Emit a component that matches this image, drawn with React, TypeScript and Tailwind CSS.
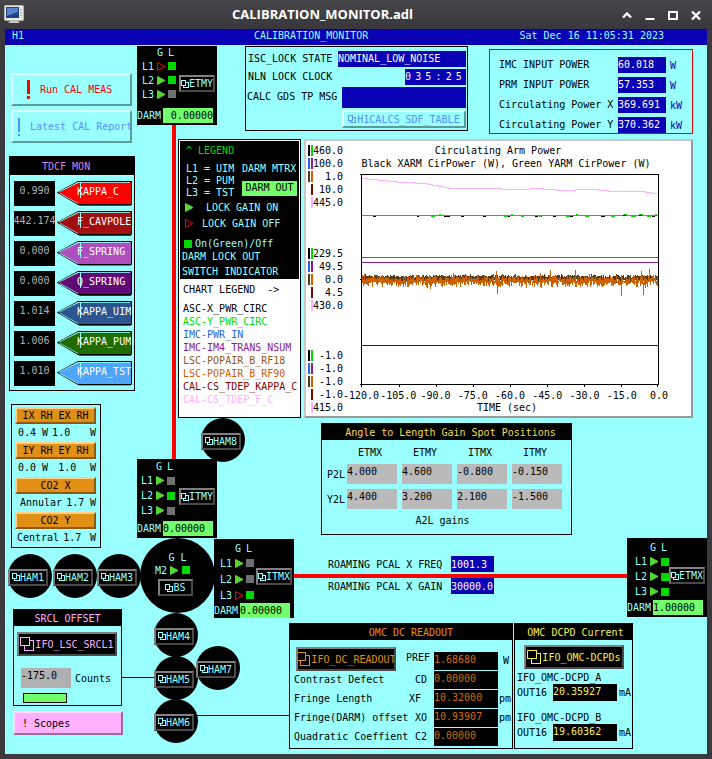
import { useId } from 'react';
import type { ReactNode } from 'react';
import clsx from 'clsx';

const kappas = [
  { name: 'KAPPA_C', value: '0.990', fill: '#ff0000' },
  { name: 'F_CAVPOLE', value: '442.174', fill: '#a01010' },
  { name: 'F_SPRING', value: '0.000', fill: '#ae4ebc' },
  { name: 'Q_SPRING', value: '0.000', fill: '#610a75' },
  { name: 'KAPPA_UIM', value: '1.014', fill: '#2a5590' },
  { name: 'KAPPA_PUM', value: '1.006', fill: '#216c00' },
  { name: 'KAPPA_TST', value: '1.010', fill: '#4ea5f9' },
];

const heaters = [
  { title: 'IX RH EX RH', left: '0.4 W', right: '1.0', pad: 'pl-[3px]' },
  { title: 'IY RH EY RH', left: '0.0 W', right: ' 1.0', pad: 'pl-[3px]' },
  { title: 'CO2 X', left: 'Annular', right: '1.7', pad: 'pl-[5px]' },
  { title: 'CO2 Y', left: 'Central', right: '1.7', pad: 'pl-0.5' },
];

const powers = [
  { label: 'IMC INPUT POWER', value: '60.018', unit: 'W' },
  { label: 'PRM INPUT POWER', value: '57.353', unit: 'W' },
  { label: 'Circulating Power X', value: '369.691', unit: 'kW' },
  { label: 'Circulating Power Y', value: '370.362', unit: 'kW' },
];

const channels = [
  { name: 'ASC-X_PWR_CIRC', color: 'text-black' },
  { name: 'ASC-Y_PWR_CIRC', color: 'text-[#00d800]' },
  { name: 'IMC-PWR_IN', color: 'text-[#2a63e4]' },
  { name: 'IMC-IM4_TRANS_NSUM', color: 'text-[#8b1a96]' },
  { name: 'LSC-POPAIR_B_RF18', color: 'text-[#8a5a22]' },
  { name: 'LSC-POPAIR_B_RF90', color: 'text-[#cd6100]' },
  { name: 'CAL-CS_TDEP_KAPPA_C', color: 'text-[#820400]' },
  { name: 'CAL-CS_TDEP_F_C', color: 'text-[#ffb0ff]' },
];

const axisColors = [
  ['bg-black', 'bg-[#00d800]'],
  ['bg-[#2a63e4]', 'bg-[#8b1a96]'],
  ['bg-[#5a3a10]', 'bg-[#cd6100]'],
  ['bg-transparent', 'bg-[#820400]'],
  ['bg-transparent', 'bg-[#ffb0ff]'],
];

const axisGroups = [
  ['460.0', '100.0', '1.0', '10.0', '445.0'],
  ['229.5', '49.5', '0.0', '4.5', '430.0'],
  ['-1.0', '-1.0', '-1.0', '-1.0', '415.0'],
];

const times = ['-120.0', '-105.0', '-90.0', '-75.0', '-60.0', '-45.0', '-30.0', '-15.0', '0.0'];

const optics = ['ETMX', 'ETMY', 'ITMX', 'ITMY'];
const gains = [
  { name: 'P2L', values: ['4.000', '4.600', '-0.800', '-0.150'] },
  { name: 'Y2L', values: ['4.400', '3.200', '2.100', '-1.500'] },
];

const readouts = [
  { label: 'Contrast Defect', code: 'CD' },
  { label: 'Fringe Length', code: 'XF ' },
  { label: 'Fringe(DARM) offset', code: 'XO' },
  { label: 'Quadratic Coeffient', code: 'C2' },
];
const readoutValues = [
  { value: '1.68680', unit: 'W' },
  { value: '0.00000', unit: '' },
  { value: '10.32000', unit: 'pm' },
  { value: '10.93907', unit: 'pm' },
  { value: '0.00000', unit: '' },
];

// Small deterministic generator so the noise trace is the same on every render
function noisePath(seed: number, top: number, bottom: number, jitter: number) {
  let s = seed;
  const next = () => {
    s = (s * 16807) % 2147483647;
    return s / 2147483647;
  };
  let d = '';
  for (let x = 1; x < 297; x++) {
    const spike = next() > 0.95 ? jitter : 0;
    const y1 = Math.round(top - next() * jitter + next() * jitter - spike * next());
    const y2 = Math.round(bottom - next() * jitter + next() * jitter + spike * next());
    d += `M${x + 0.5} ${y1}V${Math.max(y2, y1 + 1)}`;
  }
  return d;
}

const brownNoise = noisePath(71, 102, 107, 2);
const orangeNoise = noisePath(4242, 104, 110, 4);

function ScreensIcon({ big = false }: { big?: boolean }) {
  if (big) {
    return (
      <svg width="14" height="14" viewBox="0 0 14 14" className="shrink-0" fill="none" stroke="currentColor" shapeRendering="crispEdges" aria-hidden="true">
        <path d="M.5 .5h9v8h-9zM9.500 3.500h4v10h-9v-5" />
      </svg>
    );
  }
  return (
    <svg width="8" height="8" viewBox="0 0 8 8" className="shrink-0" fill="none" stroke="currentColor" shapeRendering="crispEdges" aria-hidden="true">
      <path d="M.5 .5h4v5h-4zM4.500 2.500h3v5h-5v-2" />
    </svg>
  );
}

function Related({ children, className, big = false }: { children: ReactNode; className?: string; big?: boolean }) {
  return (
    <button
      className={clsx(
        'flex items-center justify-center overflow-hidden whitespace-nowrap border-2 border-t-[#808080] border-l-[#808080] border-r-[#4a4a4a] border-b-[#4a4a4a] bg-black',
        big ? 'h-6 w-[100px] gap-px' : 'h-[17px]',
        className,
      )}
    >
      <ScreensIcon big={big} />
      {children}
    </button>
  );
}

function Gain({ on }: { on: boolean }) {
  return (
    <svg width="9" height="9" viewBox="0 0 9 9" aria-hidden="true">
      <path d="M.5 .5L8 4.500L.5 8.500z" fill={on ? '#55d633' : 'none'} stroke={on ? '#55d633' : '#ff0000'} />
    </svg>
  );
}

type OpticProps = {
  name: string;
  className: string;
  head: string;
  row: string;
  pad: string;
  gain: boolean[];
  lock: boolean[];
  darm: string;
  align?: string;
};

function Optic({ name, className, head, row, pad, gain, lock, darm, align }: OpticProps) {
  const id = useId();
  return (
    <section className={clsx('absolute flex h-[79px] w-20 flex-col justify-between bg-black pb-0.5 text-[#99ffff]', className)}>
      <div className="flex">
        <div className={pad}>
          <div className={clsx('flex items-end', head)}>
            <span className="w-[15px]" />
            <span className="w-[11px]">G</span>
            <span>L</span>
          </div>
          {['L1', 'L2', 'L3'].map((level, i) => (
            <div key={level} className={clsx('flex items-center', row)}>
              <span className="w-[15px]">{level}</span>
              <span className="w-[11px]"><Gain on={gain[i]} /></span>
              <span className={clsx('size-2', lock[i] ? 'bg-[#00d800]' : 'bg-[#707070]')} />
            </div>
          ))}
        </div>
        <Related className="mt-[29px] mr-0.5 ml-auto w-9">{name}</Related>
      </div>
      <div className="flex items-center gap-0.5">
        <label htmlFor={id} className="w-6">DARM</label>
        <input id={id} defaultValue={darm} className={clsx('h-[15px] w-[50px] bg-[#73ff6b] text-black', align)} />
      </div>
    </section>
  );
}

function Chamber({ name, className }: { name: string; className: string }) {
  return (
    <div className={clsx('absolute flex size-11 items-center rounded-full bg-black pt-0.5', className)}>
      <Related className="w-10 text-[#99ffff]">{name}</Related>
    </div>
  );
}

function Panel({ title, color, className, children }: { title: string; color: string; className?: string; children: ReactNode }) {
  return (
    <section className={clsx('border border-black', className)}>
      <h2 className={clsx('flex h-4 items-center justify-center bg-black', color)}>{title}</h2>
      {children}
    </section>
  );
}

function TitleBar() {
  return (
    <header className="flex h-[29px] items-center bg-linear-to-b from-[#47464b] to-[#38373b] pr-2.5 pl-1 text-white">
      <svg width="20" height="19" viewBox="0 0 20 19" aria-hidden="true">
        <rect x=".5" y=".5" width="19" height="15" rx="1" fill="#e8e8e2" stroke="#b5b5ae" />
        <rect x="2" y="2" width="13" height="11" fill="#1d3f86" />
        <path d="M3 3h11v4L3 11z" fill="#5682cc" />
        <path d="M17 4v1M17 7v1M17 10v1" stroke="#777" />
        <path d="M6 16h8l2 2H4z" fill="#c9c9c4" />
      </svg>
      <h1 className="flex-1 text-center font-['Open_Sans','Noto_Sans',sans-serif] text-[13px] font-bold">CALIBRATION_MONITOR.adl</h1>
      <div className="flex gap-[11px]">
        <button aria-label="Shade" className="size-3">
          <svg viewBox="0 0 12 12" fill="none" stroke="white" strokeWidth="2.400"><path d="M2 8.500L6 4.500L10 8.500" /></svg>
        </button>
        <button aria-label="Minimize" className="size-3">
          <svg viewBox="0 0 12 12" fill="none" stroke="white" strokeWidth="2"><path d="M1.500 10h9" /></svg>
        </button>
        <button aria-label="Maximize" className="size-3">
          <svg viewBox="0 0 12 12" fill="none" stroke="white" strokeWidth="2"><path d="M2 3h8v7H2z" /></svg>
        </button>
        <button aria-label="Close" className="size-3">
          <svg viewBox="0 0 12 12" fill="none" stroke="white" strokeWidth="2.400"><path d="M2 2.500L10 10.500M10 2.500L2 10.500" /></svg>
        </button>
      </div>
    </header>
  );
}

function Kappa({ name, value, fill }: { name: string; value: string; fill: string }) {
  return (
    <div className="flex h-[30px] gap-0.5 last:h-7">
      <span className="flex h-[25px] w-[41px] justify-center bg-black pt-[3px] text-[#b0b0b0]">{value}</span>
      <button className="relative h-[25px] w-[76px] pb-1 pl-5 text-left text-white">
        <svg width="76" height="25" viewBox="0 0 76 25" className="absolute inset-0" aria-hidden="true">
          <path d="M1 11.500L23 1H74V25H23z" fill={fill} />
          <path d="M.5 11.500L21 .5H74.500V23.500H21z" fill="none" stroke="black" />
          <path d="M2 11L21 1.500H73M3 12.500L21 22.500" fill="none" stroke="#99ffff" strokeWidth=".8" />
          <path d="M23.500 1V17" stroke="#99ffff" />
        </svg>
        <span className="relative">{name}</span>
      </button>
    </div>
  );
}

function LeftColumn() {
  const bevel = 'flex h-[33px] w-[121px] items-center overflow-hidden whitespace-nowrap border-2 border-t-[#d5ffff] border-l-[#d5ffff] border-r-[#5c9999] border-b-[#5c9999]';
  return (
    <div className="w-[132px] shrink-0 pt-7 pl-1">
      <div className="flex flex-col gap-1 pl-0.5">
        <button className={clsx(bevel, 'gap-2.5 pl-3.5 text-[#ff0000]')}>
          <svg width="3" height="19" className="shrink-0" fill="currentColor" aria-hidden="true"><path d="M0 0h3v14H0zM0 16h3v3H0z" /></svg>
          Run CAL MEAS
        </button>
        <button className={clsx(bevel, 'gap-2.5 pl-[5px] text-[#5590ff]')}>
          <svg width="2" height="18" className="shrink-0" fill="currentColor" aria-hidden="true"><path d="M0 0h2v14H0zM0 16h2v2H0z" /></svg>
          Latest CAL Report
        </button>
      </div>

      <section className="mt-[13px] w-[126px] border border-black pb-px">
        <h2 className="flex h-[18px] items-center bg-black pl-8 text-[#dc82e6]">TDCF MON</h2>
        <div className="pt-1.5 pl-1">
          {kappas.map((k) => <Kappa key={k.name} {...k} />)}
        </div>
      </section>

      <section className="mt-[13px] ml-0.5 w-[90px] border border-black px-[3px] pt-0.5">
        {heaters.map((h) => (
          <div key={h.title} className="h-[35px]">
            <button className="block h-[17px] w-[81px] border-2 border-t-[#ffd089] border-l-[#ffd089] border-r-[#8c5a0c] border-b-[#8c5a0c] bg-[#e19015] leading-3">{h.title}</button>
            <div className={clsx('flex items-center pt-0.5 whitespace-pre', h.pad)}>
              <span>{h.left}</span>
              <span className="ml-1">{h.right}</span>
              <span className="mr-px ml-auto">W</span>
            </div>
          </div>
        ))}
      </section>
    </div>
  );
}

function StatusPanels() {
  return (
    <div className="flex items-start justify-between pt-px pl-[67px]">
      <section className="h-[85px] w-[223px] border border-black pt-1 pr-px">
        <div className="flex h-[18px] items-start justify-between pl-0.5">
          <span className="pt-px">ISC_LOCK STATE</span>
          <span className="h-4 w-32 bg-[#0a00b4] pt-px text-white">NOMINAL_LOW_NOISE</span>
        </div>
        <div className="flex h-[18px] items-start justify-between pl-0.5">
          <span className="pt-px">NLN LOCK CLOCK</span>
          <span className="flex h-4 w-[61px] bg-[#0a00b4] pt-px text-white">
            {'035:25'.split('').map((c, i) => <span key={i} className="flex-1">{c}</span>)}
          </span>
        </div>
        <div className="flex items-start justify-between pl-px">
          <span className="pt-[3px]">CALC GDS TP MSG</span>
          <span className="h-[21px] w-[124px] bg-[#0a00b4]" />
        </div>
        <button className="mt-0.5 ml-auto flex h-[18px] w-[124px] items-center justify-center gap-px border-2 border-t-[#d5ffff] border-l-[#d5ffff] border-r-[#5c9999] border-b-[#5c9999] text-[#5590ff]">
          <ScreensIcon />
          H1CALCS_SDF_TABLE
        </button>
      </section>

      <section className="mt-[3px] flex h-[85px] w-[204px] flex-col gap-1 border border-[#f00000] pt-[7px] pl-[9px]">
        {powers.map((p) => (
          <div key={p.label} className="flex h-4 items-start">
            <span className="w-[119px] pt-px">{p.label}</span>
            <span className="h-4 w-12 bg-[#0a00b4] pt-px text-white">{p.value}</span>
            <span className="pt-0.5 pl-1 text-[#0a00b4]">{p.unit}</span>
          </div>
        ))}
      </section>
    </div>
  );
}

function Legend() {
  return (
    <section className="w-[123px] shrink-0 border border-black bg-white p-px">
      <div className="h-[138px] bg-black px-0.5 pt-[3px] text-[#99ffff]">
        <h2 className="pl-1 text-[#00d800]">^ LEGEND</h2>
        <div className="mt-1.5 flex justify-between pl-1 leading-3 whitespace-nowrap">
          <div>
            <div>L1 = UIM</div>
            <div>L2 = PUM</div>
            <div>L3 = TST</div>
          </div>
          <div className="flex w-[55px] flex-col gap-1.5">
            <span>DARM MTRX</span>
            <span className="h-[15px] bg-[#73ff6b] pt-px text-center text-black">DARM OUT</span>
          </div>
        </div>
        <div className="flex h-4 items-center gap-3 pl-[3px]"><Gain on /><span>LOCK GAIN ON</span></div>
        <div className="flex h-4 items-center gap-2 pl-[3px]"><Gain on={false} /><span>LOCK GAIN OFF</span></div>
        <div className="mt-1.5 flex items-center gap-[3px] pl-0.5"><span className="size-2 bg-[#00d800]" />On(Green)/Off</div>
        <div>DARM LOCK OUT</div>
        <div className="mt-0.5">SWITCH INDICATOR</div>
      </div>
      <div className="bg-white pt-1 pb-1.5 pl-[3px]">
        <h3 className="mb-1.5 whitespace-pre">CHART LEGEND  -&gt;</h3>
        {channels.map((c) => <div key={c.name} className={c.color}>{c.name}</div>)}
      </div>
    </section>
  );
}

function Chart() {
  return (
    <section className="flex min-w-0 flex-1 border-2 border-t-[#c8c8c8] border-l-[#c8c8c8] border-r-[#9a9a9a] border-b-[#9a9a9a] bg-white pt-[3px] pr-8 pb-0.5">
      <div className="flex w-[38px] shrink-0 flex-col justify-between pl-0.5">
        {axisGroups.map((group, g) => (
          <div key={g}>
            {group.map((v, i) => (
              <div key={i} className="flex items-center">
                <span className={clsx('h-[11px] w-0.5', axisColors[i][0])} />
                <span className={clsx('ml-px h-[11px] w-0.5', axisColors[i][1])} />
                <span className="w-[30px] shrink-0 text-right">{v}</span>
              </div>
            ))}
          </div>
        ))}
      </div>
      <div className="ml-[17px] flex min-w-0 flex-1 flex-col">
        <h2 className="pr-6 text-center">Circulating Arm Power</h2>
        <div className="pr-2 text-center whitespace-nowrap">Black XARM CirPower (W), Green YARM CirPower (W)</div>
        <svg viewBox="0 0 298 215" preserveAspectRatio="none" shapeRendering="crispEdges" className="mt-1 h-[215px] w-full overflow-visible" fill="none" role="img" aria-label="Circulating arm power over the last 120 seconds">
          <path d="M1 4.500H6V5.500H16V6.500H26V7.500H36V8.500H54V9.500H66V10.500H71V11.500H77V12.500H82V13.500H87V14.500H140V15.500H169V14.500H182V15.500H194V16.500H214V15.500H238V16.500H247V17.500H284V18.500H290V19.500H297" stroke="#ffb0ff" />
          <path d="M1 41.500H297" stroke="#00d800" />
          <path d="M12 42.500h3M56 42.500h2M83 42.500h6M100 42.500h3M122 42.500h3M146 42.500h3M174 42.500h3M192 42.500h3M209 42.500h3M240 42.500h4M262 41.500h3M278 41.500h3M291 42.500h3" stroke="black" />
          <path d="M70 42.500h4M78 40.500h2M143 42.500h4M150 40.500h2M160 42.500h3M178 42.500h3M205 42.500h4M215 40.500h2M224 42.500h4M250 42.500h4M263 40.500h3M270 42.500h5M278 40.500h4M286 42.500h4M294 40.500h2" stroke="#00d800" />
          <path d="M1 83.500H297" stroke="#2a63e4" />
          <path d="M1 88.500H297" stroke="#8b1a96" />
          <path d={brownNoise} stroke="#5a3a10" strokeWidth="1.500" />
          <path d={orangeNoise} stroke="#cd6100" strokeWidth="1.500" />
          <path d="M135.500 97V106M189.500 96V106M214.500 96V106M280.500 97V106M288.500 95V106M136.500 108V120M260.500 108V122M282.500 108V121" stroke="#cd6100" />
          <path d="M1 171.500H297" stroke="#820400" />
          <path d="M-1 .5H297.500V210.500H-1M.5 0V213M-1 105.500H0M38.500 211v2M75.500 211v2M112.500 211v2M149.500 211v2M186.500 211v2M223.500 211v2M260.500 211v2M296.500 211v2" stroke="black" />
        </svg>
        <div className="flex justify-between">
          {times.map((t) => <span key={t} className="flex w-0 justify-center">{t}</span>)}
        </div>
        <div className="pr-1.5 text-center leading-3">TIME (sec)</div>
      </div>
    </section>
  );
}

function SpotPositions() {
  return (
    <Panel title="Angle to Length Gain Spot Positions" color="pl-2 text-[#f9dc4a]" className="h-[112px] w-[251px]">
      <table className="w-[245px] table-fixed border-separate border-spacing-[5px]">
        <thead>
          <tr className="h-3.5">
            <td className="w-[15px]" />
            {optics.map((o) => <th key={o} scope="col" className="p-0 pr-1 font-normal">{o}</th>)}
          </tr>
        </thead>
        <tbody>
          {gains.map((g) => (
            <tr key={g.name}>
              <th scope="row" className="p-0 text-left font-normal">{g.name}</th>
              {g.values.map((v, i) => (
                <td key={optics[i]} className="bg-[#bababa] p-0">
                  <input aria-label={`${optics[i]} ${g.name}`} defaultValue={v} className="block h-5 w-full bg-[#bababa] pb-1.5" />
                </td>
              ))}
            </tr>
          ))}
        </tbody>
      </table>
      <div className="pr-2 text-center">A2L gains</div>
    </Panel>
  );
}

function SrclOffset() {
  return (
    <div className="w-[132px] shrink-0 pl-2">
      <Panel title="SRCL OFFSET" color="text-[#ffb0ff]" className="h-[97px] w-[109px]">
        <div className="flex flex-col px-[3px] pt-1.5">
          <Related big className="text-[#ffb0ff]">IFO_LSC_SRCL1</Related>
          <div className="mt-3 flex items-center gap-1 pl-1">
            <input id="srcl" defaultValue="-175.0" className="h-5 w-[50px] bg-[#b0b0b0] pb-1.5" />
            <label htmlFor="srcl">Counts</label>
          </div>
          <div className="mt-[5px] ml-1.5 h-2.5 w-11 border border-black bg-[#73ff6b]" />
        </div>
      </Panel>
      <button className="mt-[5px] h-6 w-[110px] border-2 border-t-[#ffdcff] border-l-[#ffdcff] border-r-[#9a6a9a] border-b-[#9a6a9a] bg-[#ffb0ff] pl-[7px] text-left">! Scopes</button>
    </div>
  );
}

function DcReadout() {
  return (
    <Panel title="OMC DC READOUT" color="pl-5 text-[#e19015]" className="h-[126px] w-[224px]">
      <div className="flex">
        <div className="w-[144px] pl-1">
          <div className="flex h-[30px] items-center justify-between pt-2 pr-1 pl-0.5">
            <Related big className="text-[#e19015]">IFO_DC_READOUT</Related>
            <span className="pb-1">PREF</span>
          </div>
          {readouts.map((r) => (
            <div key={r.label} className="flex h-[19px] items-center justify-between pr-[7px] whitespace-pre">
              <span>{r.label}</span>
              <span>{r.code}</span>
            </div>
          ))}
        </div>
        <div className="flex flex-col gap-px pt-3">
          {readoutValues.map((r, i) => (
            <div key={i} className="flex h-[18px] gap-px">
              <span className="w-16 bg-black pt-px text-[#d96a06]">{r.value}</span>
              <span className={clsx('pt-0.5', r.unit === 'W' && 'pl-1')}>{r.unit}</span>
            </div>
          ))}
        </div>
      </div>
    </Panel>
  );
}

function DcpdCurrent() {
  return (
    <Panel title="OMC DCPD Current" color="pl-1 text-[#f5ee4e]" className="h-[126px] w-[119px]">
      <div className="flex flex-col pt-[5px] pl-0.5">
        <Related big className="ml-[7px] text-[#f5ee4e]">IFO_OMC-DCPDs</Related>
        {[['A', '20.35927'], ['B', '19.60362']].map(([ch, value]) => (
          <div key={ch} className="mb-2">
            <div className="mt-0.5">IFO_OMC-DCPD_{ch}</div>
            <div className="flex h-[17px] items-center">
              <span className="w-9">OUT16</span>
              <span className="h-[17px] w-16 bg-black pt-px text-[#f5ee4e]">{value}</span>
              <span className="pl-0.5">mA</span>
            </div>
          </div>
        ))}
      </div>
    </Panel>
  );
}

// Beam lines and chambers, placed on the canvas behind the panels
function Interferometer() {
  return (
    <>
      <div className="absolute top-20 left-[167px] h-[335px] w-1 bg-[#ff0000]" />
      <div className="absolute top-[529px] right-20 left-[289px] h-1 bg-[#ff0000]" />
      <div className="absolute top-[632px] left-[117px] h-px w-8 bg-black" />
      <div className="absolute top-[670px] left-[190px] h-px w-[94px] bg-black" />
      <Optic name="ETMY" className="top-px left-[132px]" head="h-[13px]" row="h-3.5" pad="pl-[5px]" gain={[false, true, true]} lock={[true, true, false]} darm="0.00000" align="text-right" />
      <Chamber name="HAM8" className="top-[373px] left-[196px]" />
      <Chamber name="HAM1" className="top-[509px] left-[3px]" />
      <Chamber name="HAM2" className="top-[509px] left-12" />
      <Chamber name="HAM3" className="top-[509px] left-[92px]" />
      <div className="absolute top-[493px] left-[135px] flex size-[75px] flex-col items-center rounded-full bg-black pt-[13px] text-[#99ffff]">
        <div className="whitespace-pre">G L</div>
        <div className="flex h-3 items-center gap-[3px] pr-2.5">M2<Gain on /><span className="size-2 bg-[#00d800]" /></div>
        <Related className="mt-[3px] mr-1 w-[35px]">BS</Related>
      </div>
      <Optic name="ITMY" className="top-[414px] left-[132px]" head="h-3.5" row="h-[15px]" pad="pl-1" gain={[true, true, true]} lock={[false, true, false]} darm="0.00000" />
      <Optic name="ITMX" className="top-[494px] left-[209px]" head="h-4" row="h-4" pad="pl-1.5" gain={[true, true, false]} lock={[false, false, true]} darm="0.00000" />
      <Optic name="ETMX" className="top-[493px] right-0" head="h-4" row="h-[15px]" pad="pl-2" gain={[true, true, true]} lock={[true, true, true]} darm="1.00000" />
      <Chamber name="HAM4" className="top-[568px] left-[149px]" />
      <Chamber name="HAM5" className="top-[611px] left-[149px]" />
      <Chamber name="HAM6" className="top-[654px] left-[149px]" />
      <Chamber name="HAM7" className="top-[601px] left-[191px]" />
    </>
  );
}

export default function App() {
  return (
    <div className="flex min-h-screen flex-col bg-[#3a393d] font-['DejaVu_Sans_Mono','Liberation_Mono',monospace] text-[10px] leading-[13px] text-black">
      <TitleBar />
      <div className="mx-[5px] flex h-4 items-start bg-[#0a00b4] text-[#99ffff]">
        <span className="w-[249px] pl-[7px]">H1</span>
        <span className="flex-1">CALIBRATION_MONITOR</span>
        <time className="pr-[43px]">Sat Dec 16 11:05:31 2023</time>
      </div>
      <main className="relative mx-[5px] mb-[5px] flex-1 bg-[#99ffff]">
        <Interferometer />
        <div className="flex">
          <LeftColumn />
          <div className="mr-[14px] ml-[41px] min-w-0 flex-1">
            <StatusPanels />
            <div className="mt-[5px] flex gap-[3px]">
              <Legend />
              <Chart />
            </div>
            <div className="mt-[5px] pl-[143px]">
              <SpotPositions />
              <div className="mt-[21px] flex flex-col gap-1.5 pl-[7px]">
                {[['FREQ', '1001.3'], ['GAIN', '30000.0']].map(([k, v]) => (
                  <div key={k} className="flex h-4 items-center">
                    <label htmlFor={k} className="w-[123px]">ROAMING PCAL X {k}</label>
                    <input id={k} defaultValue={v} className="h-4 w-[43px] bg-[#0a00b4] text-white" />
                  </div>
                ))}
              </div>
            </div>
          </div>
        </div>
        <div className="mt-[15px] flex">
          <SrclOffset />
          <div className="flex gap-px pt-[14px] pb-1 pl-[152px]">
            <DcReadout />
            <DcpdCurrent />
          </div>
        </div>
      </main>
    </div>
  );
}
